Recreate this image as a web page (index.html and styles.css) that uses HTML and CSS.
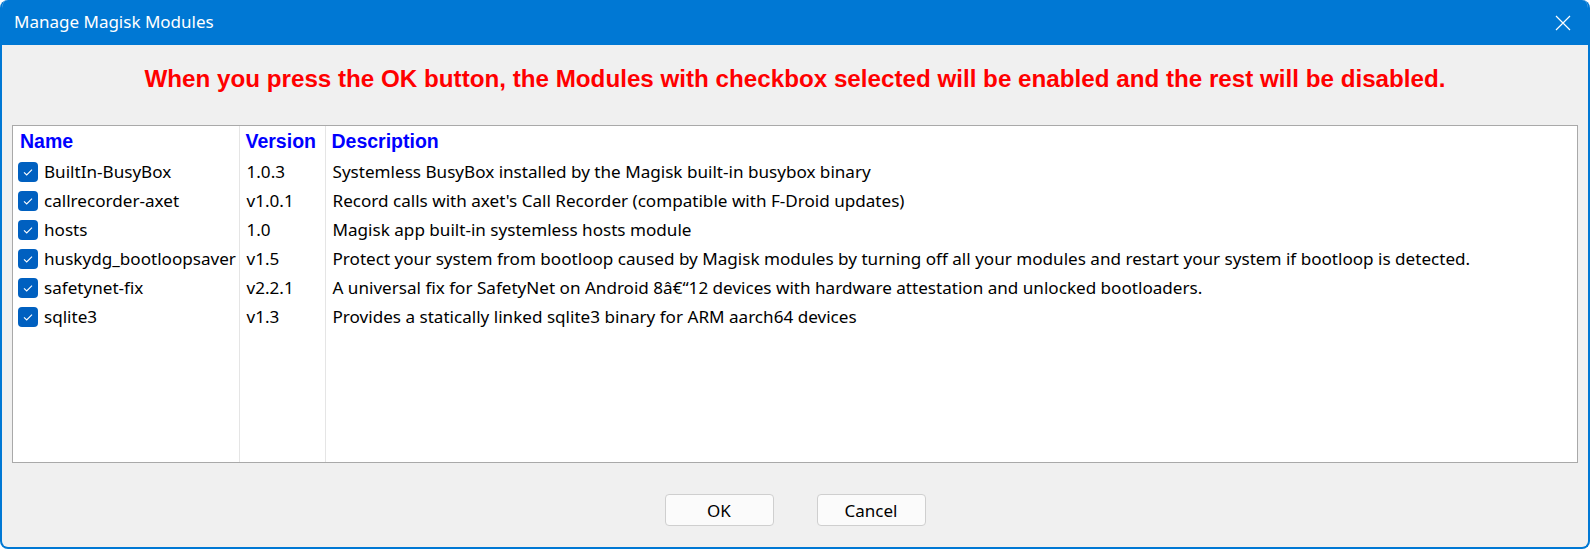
FILE: index.html
```html
<!DOCTYPE html>
<html>
<head>
<meta charset="utf-8">
<title>Manage Magisk Modules</title>
<link rel="stylesheet" href="styles.css">
</head>
<body>
<div class="window">
  <div class="titlebar">
    <span class="title">Manage Magisk Modules</span>
    <svg class="close" width="16" height="16" viewBox="0 0 16 16"><path d="M1 1 L15 15 M15 1 L1 15" stroke="#fff" stroke-width="1.2" fill="none"/></svg>
  </div>
  <div class="content">
    <div class="message">When you press the OK button, the Modules with checkbox selected will be enabled and the rest will be disabled.</div>
    <div class="listbox">
      <table class="modules">
        <colgroup><col class="c-name"><col class="c-ver"><col class="c-desc"></colgroup>
        <thead>
          <tr><th>Name</th><th>Version</th><th>Description</th></tr>
        </thead>
        <tbody>
          <tr><td class="name"><span class="cb"><svg viewBox="0 0 20 20" width="20" height="20"><path d="M6 10.3 L8.7 13 L14 7.6" stroke="#fff" stroke-width="1.1" fill="none"/></svg></span>BuiltIn-BusyBox</td><td>1.0.3</td><td>Systemless BusyBox installed by the Magisk built-in busybox binary</td></tr>
          <tr><td class="name"><span class="cb"><svg viewBox="0 0 20 20" width="20" height="20"><path d="M6 10.3 L8.7 13 L14 7.6" stroke="#fff" stroke-width="1.1" fill="none"/></svg></span>callrecorder-axet</td><td>v1.0.1</td><td>Record calls with axet's Call Recorder (compatible with F-Droid updates)</td></tr>
          <tr><td class="name"><span class="cb"><svg viewBox="0 0 20 20" width="20" height="20"><path d="M6 10.3 L8.7 13 L14 7.6" stroke="#fff" stroke-width="1.1" fill="none"/></svg></span>hosts</td><td>1.0</td><td>Magisk app built-in systemless hosts module</td></tr>
          <tr><td class="name"><span class="cb"><svg viewBox="0 0 20 20" width="20" height="20"><path d="M6 10.3 L8.7 13 L14 7.6" stroke="#fff" stroke-width="1.1" fill="none"/></svg></span>huskydg_bootloopsaver</td><td>v1.5</td><td>Protect your system from bootloop caused by Magisk modules by turning off all your modules and restart your system if bootloop is detected.</td></tr>
          <tr><td class="name"><span class="cb"><svg viewBox="0 0 20 20" width="20" height="20"><path d="M6 10.3 L8.7 13 L14 7.6" stroke="#fff" stroke-width="1.1" fill="none"/></svg></span>safetynet-fix</td><td>v2.2.1</td><td>A universal fix for SafetyNet on Android 8â€“12 devices with hardware attestation and unlocked bootloaders.</td></tr>
          <tr><td class="name"><span class="cb"><svg viewBox="0 0 20 20" width="20" height="20"><path d="M6 10.3 L8.7 13 L14 7.6" stroke="#fff" stroke-width="1.1" fill="none"/></svg></span>sqlite3</td><td>v1.3</td><td>Provides a statically linked sqlite3 binary for ARM aarch64 devices</td></tr>
          <tr class="filler"><td></td><td></td><td></td></tr>
        </tbody>
      </table>
    </div>
  </div>
  <div class="footer">
    <button class="btn">OK</button>
    <button class="btn">Cancel</button>
  </div>
</div>
</body>
</html>
```
FILE: styles.css
```css
html, body {
  margin: 0;
  padding: 0;
  background: #ffffff;
}

.window {
  width: 1590px;
  height: 549px;
  box-sizing: border-box;
  border: 2px solid #0078d4;
  border-top: 0;
  border-radius: 8px;
  background: #f0f0f0;
  overflow: hidden;
  display: flex;
  flex-direction: column;
  font-family: "Noto Sans", "Open Sans", sans-serif;
  color: #000;
}

.titlebar {
  height: 45px;
  flex: none;
  background: #0078d4;
  display: flex;
  align-items: center;
  justify-content: space-between;
  padding: 0 17px 0 12px;
  color: #fff;
}

.title {
  font-size: 17px;
  position: relative;
  top: -1px;
}

.close {
  display: block;
}

.content {
  padding: 0 10px;
  display: flex;
  flex-direction: column;
}

.message {
  height: 68px;
  line-height: 68px;
  text-align: center;
  color: #ff0000;
  font-family: "Liberation Sans", Arial, sans-serif;
  font-weight: bold;
  font-size: 24.2px;
  white-space: nowrap;
  margin-bottom: 12px;
}

.listbox {
  height: 338px;
  box-sizing: border-box;
  border: 1px solid #a9a9a9;
  background: #fff;
  overflow: hidden;
}

.modules {
  width: 100%;
  height: 100%;
  border-collapse: collapse;
  table-layout: fixed;
}

.c-name { width: 226px; }
.c-ver { width: 86px; }

.modules th {
  height: 31px;
  padding: 0 0 0 6px;
  text-align: left;
  font-family: "Liberation Sans", Arial, sans-serif;
  font-weight: bold;
  font-size: 19.5px;
  color: #0000ff;
  border-right: 1px solid #e5e5e5;
  white-space: nowrap;
}

.modules th:first-child {
  padding-left: 7px;
}

.modules td {
  height: 29px;
  padding: 0 0 0 7px;
  font-size: 17.1px;
  border-right: 1px solid #e5e5e5;
  white-space: nowrap;
  overflow: hidden;
  vertical-align: middle;
}

.modules th:last-child,
.modules td:last-child {
  border-right: 0;
}

.modules td.name {
  padding-left: 5px;
}

.modules tr.filler td {
  height: auto;
}

.cb {
  display: inline-block;
  width: 20px;
  height: 20px;
  border-radius: 4px;
  background: #0060c0;
  vertical-align: middle;
  margin-right: 6px;
  position: relative;
  top: -1px;
}

.cb svg {
  display: block;
}

.footer {
  flex: 1;
  display: flex;
  justify-content: center;
  align-items: flex-start;
  gap: 43px;
  padding-top: 31px;
}

.btn {
  width: 109px;
  height: 32px;
  box-sizing: border-box;
  border: 1px solid #cfcfcf;
  border-radius: 4px;
  background: #fbfbfb;
  font-family: "Noto Sans", "Open Sans", sans-serif;
  font-size: 17px;
  color: #000;
  padding: 0;
}
```
